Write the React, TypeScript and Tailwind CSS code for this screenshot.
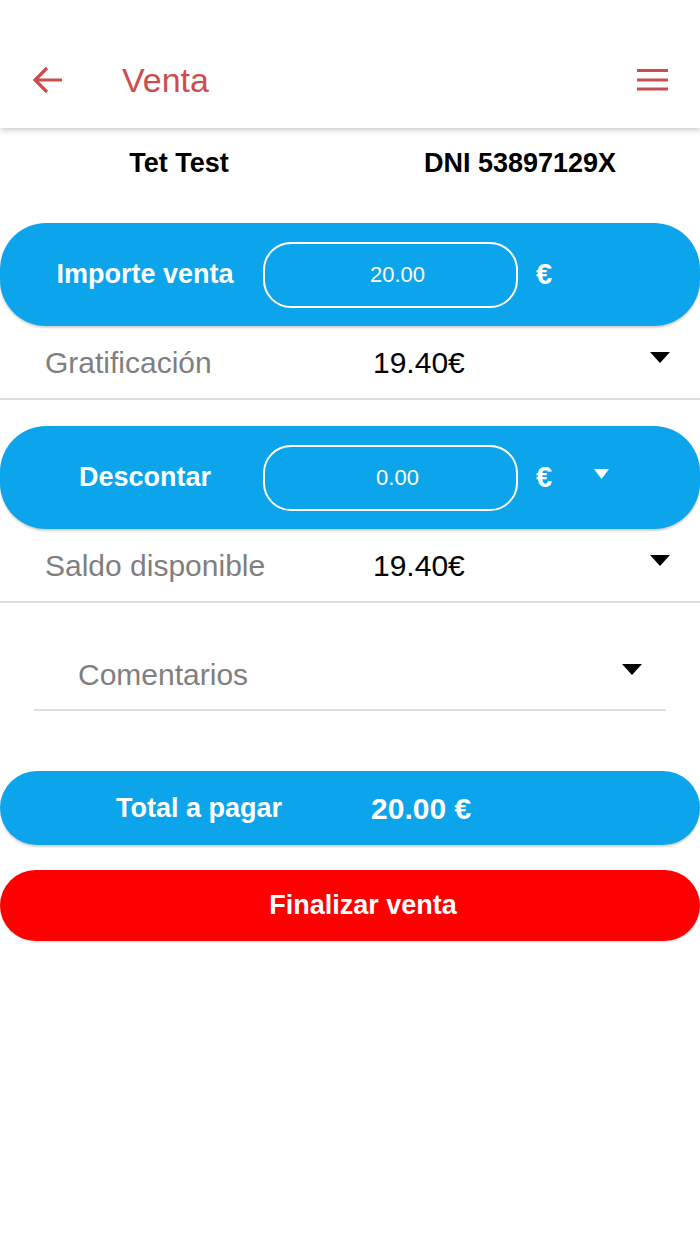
import React from "react";

const font = { fontFamily: '"Liberation Sans", Arial, Helvetica, sans-serif' };

function Tri({ color = "#000", w = 20, h = 11 }: { color?: string; w?: number; h?: number }) {
  return (
    <svg width={w} height={h} viewBox={`0 0 ${w} ${h}`}>
      <polygon points={`0,0 ${w},0 ${w / 2},${h}`} fill={color} />
    </svg>
  );
}

function BlueInputRow({ label, value, caret }: { label: string; value: string; caret?: boolean }) {
  return (
    <div className="flex items-center h-[103px] bg-[#0ca4eb] rounded-[46px] shadow-[0_2px_2px_rgba(0,0,0,0.18)]">
      <div className="w-[263px] pl-[27px] text-center text-white font-bold text-[27px]">{label}</div>
      <div className="w-[255px] h-[66px] rounded-[28px] border-2 border-white flex items-center justify-center pl-[14px] text-white text-[22px]">
        {value}
      </div>
      <div className="ml-[18px] text-white font-bold text-[29px] leading-none">€</div>
      {caret && (
        <div className="ml-[42px] -mt-[8px]">
          <Tri color="#fff" w={15} h={10} />
        </div>
      )}
    </div>
  );
}

function InfoRow({ label, value }: { label: string; value: string }) {
  return (
    <div className="flex items-center h-[74px] border-b-2 border-[#dedede] relative">
      <div className="w-[373px] pl-[45px] text-[30px] text-[#7f7f7f]">{label}</div>
      <div className="text-[30px] text-black">{value}</div>
      <div className="absolute right-[30px] top-[26px]">
        <Tri />
      </div>
    </div>
  );
}

export default function App() {
  return (
    <div className="w-[700px] min-h-[1244px] bg-white" style={font}>
      <header className="h-[128px] pt-[32px] flex items-center bg-white shadow-[0_2px_6px_rgba(0,0,0,0.22)] relative z-10">
        <svg className="ml-[32px]" width="31" height="28" viewBox="0 0 31 28" fill="none">
          <path d="M30 14H3M15 2L3 14l12 12" stroke="#cc4d4d" strokeWidth="3.2" />
        </svg>
        <div className="ml-[59px] text-[34px] text-[#cc4d4d] leading-none">Venta</div>
        <svg className="ml-auto mr-[32px]" width="31" height="22" viewBox="0 0 31 22">
          <rect x="0" y="0" width="31" height="3" fill="#cc4d4d" />
          <rect x="0" y="9.5" width="31" height="3" fill="#cc4d4d" />
          <rect x="0" y="18.5" width="31" height="3" fill="#cc4d4d" />
        </svg>
      </header>

      <div className="flex h-[70px] items-center text-[27px] font-bold text-black">
        <div className="w-1/2 pl-[8px] text-center">Tet Test</div>
        <div className="w-1/2 pr-[10px] text-center">DNI 53897129X</div>
      </div>

      <div className="mt-[25px]">
        <BlueInputRow label="Importe venta" value="20.00" />
      </div>
      <InfoRow label="Gratificación" value="19.40€" />

      <div className="mt-[26px]">
        <BlueInputRow label="Descontar" value="0.00" caret />
      </div>
      <InfoRow label="Saldo disponible" value="19.40€" />

      <div className="mx-[34px] mt-[36px] h-[72px] flex items-center border-b-2 border-[#dedede]">
        <div className="pl-[44px] text-[30px] text-[#7f7f7f]">Comentarios</div>
        <div className="ml-auto mr-[24px] -mt-[10px]">
          <Tri />
        </div>
      </div>

      <div className="mt-[60px] h-[74px] rounded-full bg-[#0ca4eb] shadow-[0_2px_2px_rgba(0,0,0,0.18)] flex items-center text-white font-bold">
        <div className="pl-[116px] text-[27px]">Total a pagar</div>
        <div className="ml-[89px] text-[30px]">20.00 €</div>
      </div>

      <div className="mt-[25px] h-[71px] rounded-full bg-[#ff0000] shadow-[0_1px_2px_rgba(0,0,0,0.15)] flex items-center justify-center pl-[26px] text-white font-bold text-[27px]">
        Finalizar venta
      </div>
    </div>
  );
}
